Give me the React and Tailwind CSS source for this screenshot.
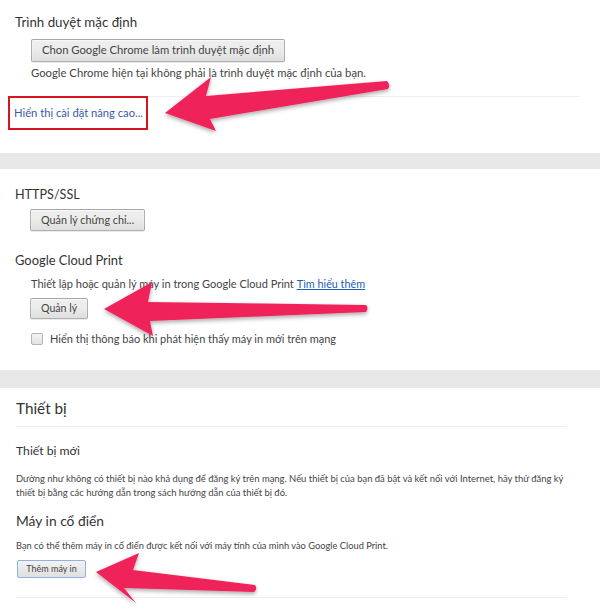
import React from "react";

const FONT = "font-['Lato',sans-serif]";

function Btn({ children, className = "" }) {
  return (
    <div
      className={`inline-flex items-center justify-center whitespace-nowrap rounded-[2px] border border-black/25 bg-linear-to-b from-[#ededed] via-[#ededed] via-40% to-[#dedede] text-[#444] shadow-[0_1px_0_rgba(0,0,0,0.08),inset_0_1px_2px_rgba(255,255,255,0.75)] ${className}`}
    >
      {children}
    </div>
  );
}

function Arrows() {
  return (
    <svg
      className="pointer-events-none absolute left-0 top-0"
      width="600"
      height="610"
      viewBox="0 0 600 610"
    >
      <defs>
        <filter id="sh" x="-10%" y="-30%" width="120%" height="160%">
          <feDropShadow dx="0" dy="2" stdDeviation="2" floodColor="#000" floodOpacity="0.35" />
        </filter>
      </defs>
      <g fill="#f0245a" filter="url(#sh)">
        <path d="M165 113 L211 77 L206 96 L387 81 Q391 85 388 89 L210 119 L216 131 Z" />
        <path d="M104 309 L152 282 L148 302 L366 305 Q369 308 366 312 L150 321 L153 336 Z" />
        <path d="M96 572 L139 553 L133 570 L255 585 Q258 589 254 592 L124 588 L136 603 Z" />
      </g>
    </svg>
  );
}

export default function App() {
  return (
    <div className={`relative h-[610px] w-[600px] overflow-hidden bg-white ${FONT}`}>
      {/* Section 1 */}
      <section className="flex flex-col pb-[23px] pt-[13px]">
        <div className="pl-[15px] text-[13.3px] leading-[18px] text-[#333]">Trình duyệt mặc định</div>
        <div className="ml-[31px] mt-[8px] flex">
          <Btn className="h-[23px] px-[10px] text-[11.25px]">Chon Google Chrome làm trình duyệt mặc định</Btn>
        </div>
        <div className="ml-[31px] mt-[3px] text-[11.3px] leading-[16px] text-[#444]">
          Google Chrome hiện tại không phải là trình duyệt mặc định của bạn.
        </div>
        <div className="ml-[15px] mr-[20px] mt-[15px] h-px bg-[#eeeeee]" />
        <div className="-mt-px ml-[8px] flex h-[34px] w-[140px] items-center border-2 border-[#d8141e] pl-[4px]">
          <span className="whitespace-nowrap text-[11.2px] leading-[16px] text-[#3b5aa6]">Hiển thị cài đặt nâng cao...</span>
        </div>
      </section>

      <div className="h-[16px] bg-[#e8e8e8]" />

      {/* Section 2 */}
      <section className="flex flex-col pb-[23px] pl-[15px] pt-[17px]">
        <div className="text-[12.6px] leading-[18px] text-[#333]">HTTPS/SSL</div>
        <div className="ml-[15px] mt-[5px] flex">
          <Btn className="h-[22px] px-[10px] text-[10.8px]">Quản lý chứng chỉ...</Btn>
        </div>
        <div className="mt-[20px] text-[12.9px] leading-[18px] text-[#333]">Google Cloud Print</div>
        <div className="ml-[16px] mt-[7px] whitespace-nowrap text-[11px] leading-[16px] text-[#444]">
          Thiết lập hoặc quản lý máy in trong Google Cloud Print{" "}
          <span className="text-[10.8px] text-[#1a5fb4] underline">Tìm hiểu thêm</span>
        </div>
        <div className="ml-[15px] mt-[6px] flex">
          <Btn className="h-[21px] px-[10px] text-[10.6px]">Quản lý</Btn>
        </div>
        <div className="ml-[16px] mt-[12px] flex items-center gap-[7px] text-[11px] leading-[16px] text-[#444]">
          <div className="h-[12px] w-[12px] rounded-[2px] border border-[#b4b4b4] bg-linear-to-b from-[#f4f4f4] to-[#e2e2e2]" />
          <span>Hiển thị thông báo khi phát hiện thấy máy in mới trên mạng</span>
        </div>
      </section>

      <div className="h-[18px] bg-[#e8e8e8]" />

      {/* Section 3 */}
      <section className="flex flex-col pl-[16px] pt-[10px]">
        <div className="text-[15.3px] leading-[20px] text-[#333]">Thiết bị</div>
        <div className="mt-[8px] h-px w-[550px] bg-[#eeeeee]" />
        <div className="mt-[16px] text-[12.2px] leading-[16px] text-[#333]">Thiết bị mới</div>
        <div className="mt-[13px] text-[9.44px] leading-[14px] text-[#444]">
          <div className="whitespace-nowrap">
            Dường như không có thiết bị nào khả dụng để đăng ký trên mạng. Nếu thiết bị của bạn đã bật và kết nối với Internet, hãy thử đăng ký
          </div>
          <div className="whitespace-nowrap">thiết bị bằng các hướng dẫn trong sách hướng dẫn của thiết bị đó.</div>
        </div>
        <div className="mt-[12px] text-[13.8px] leading-[18px] text-[#333]">Máy in cổ điển</div>
        <div className="mt-[9px] whitespace-nowrap text-[9.3px] leading-[14px] text-[#444]">
          Bạn có thể thêm máy in cổ điển được kết nối với máy tính của mình vào Google Cloud Print.
        </div>
        <div className="ml-px mt-[7px] flex">
          <div className="flex h-[18px] w-[69px] items-center justify-center whitespace-nowrap rounded-[2px] border border-[#90b2df] bg-linear-to-b from-[#f2f2f2] to-[#e0e0e0] text-[9px] text-[#444]">
            Thêm máy in
          </div>
        </div>
        <div className="mt-[19px] h-px w-[550px] bg-[#eeeeee]" />
      </section>

      <Arrows />
    </div>
  );
}
